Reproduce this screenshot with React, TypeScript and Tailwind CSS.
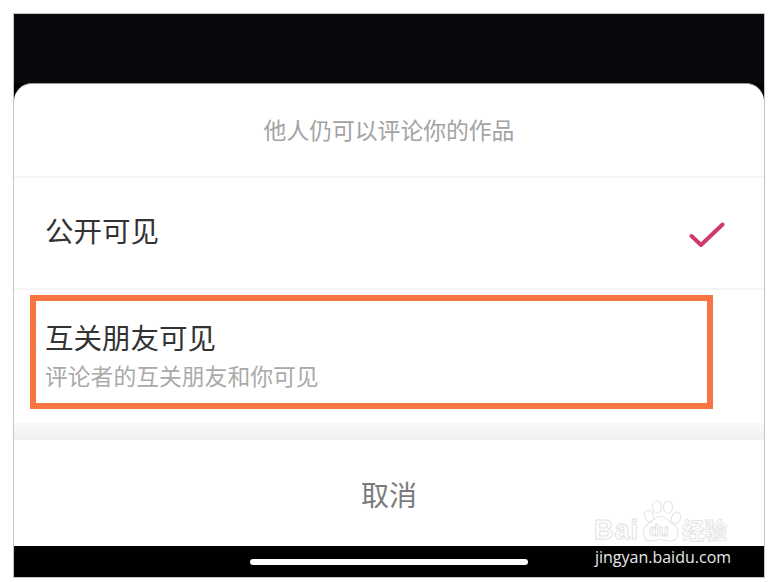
const cjk = "font-['Noto_Sans_CJK_SC','Noto_Sans',sans-serif]";

function Check() {
  return (
    <svg width="36" height="27" viewBox="0 0 36 27" fill="none" className="shrink-0">
      <path d="M2.5 14 L12 23 L33.5 2.5" stroke="#cf3a68" strokeWidth="4" strokeLinecap="round" strokeLinejoin="round" />
    </svg>
  );
}

// paw + "du" oval of the watermark
function Paw() {
  return (
    <svg width="42" height="43" viewBox="0 0 42 43" fill="none" stroke="#e6e6e6" strokeWidth="1.2" className="shrink-0">
      <ellipse cx="9" cy="16" rx="4.5" ry="6" transform="rotate(-20 9 16)" />
      <ellipse cx="17" cy="7" rx="4.5" ry="6" />
      <ellipse cx="28" cy="7" rx="4.5" ry="6" />
      <ellipse cx="36" cy="18" rx="4.5" ry="6" transform="rotate(20 36 18)" />
      <path d="M21 16 C26 16 28 21 33 24 C40 28 40 41 30 41 C26 41 25 39.5 21 39.5 C17 39.5 15 41 11 41 C2 41 1 29 8 24 C13 21 16 16 21 16 Z" />
    </svg>
  );
}

function Watermark() {
  return (
    <div className="absolute left-[594px] top-[500px] flex w-[138px] flex-col items-center">
      <div className="flex h-[43px] w-full items-end">
        <span className="w-[46px] font-['Liberation_Sans',sans-serif] text-[27px] leading-[26px] font-bold tracking-[1px] text-white [-webkit-text-stroke:1px_#e2e2e2]">Bai</span>
        <div className="relative h-[43px] w-[42px] shrink-0">
          <Paw />
          <span className="absolute left-[9px] top-[22px] font-['Liberation_Sans',sans-serif] text-[16px] leading-[18px] font-bold text-white [-webkit-text-stroke:0.8px_#e0e0e0]">du</span>
        </div>
        <span className={`${cjk} shrink-0 text-[22.5px] leading-[28px] font-bold text-white [-webkit-text-stroke:0.8px_#e2e2e2]`}>经验</span>
      </div>
      <div className="mt-[4px] whitespace-nowrap font-['Open_Sans',sans-serif] text-[16px] leading-[20px] text-[#e8e8e8]">jingyan.baidu.com</div>
    </div>
  );
}

export default function App() {
  return (
    <div className={`${cjk} relative h-[582px] w-[773px] overflow-hidden bg-white pl-[13px] pt-[13px]`}>
      <div className="flex h-[565px] w-[752px] flex-col border border-[#c4c4c4] bg-black">
        <div className="h-[69px] shrink-0 bg-[#08090c]" />
        <div className="flex h-[463px] shrink-0 flex-col overflow-hidden rounded-t-[18px] border-t border-[#9a9a9a] bg-white">
          <div className="flex h-[94px] shrink-0 items-center justify-center border-b-2 border-[#f5f5f5] text-[22.8px] text-[#a3a3a3]">
            他人仍可以评论你的作品
          </div>
          <div className="flex h-[112px] shrink-0 items-center justify-between border-b-2 border-[#f5f5f5] pb-[2px] pl-[31px] pr-[39px]">
            <span className="pb-[4px] text-[28.5px] leading-none text-[#333]">公开可见</span>
            <div className="pt-[6px]"><Check /></div>
          </div>
          <div className="flex h-[133px] shrink-0 flex-col pl-[31px] pt-[31px]">
            <div className="text-[28.5px] leading-[32px] text-[#333]">互关朋友可见</div>
            <div className="mt-[7px] text-[22.8px] leading-[32px] text-[#aaa]">评论者的互关朋友和你可见</div>
          </div>
          <div className="h-[17px] shrink-0 bg-gradient-to-b from-[#f9f9f9] to-[#f1f1f1]" />
          <div className="flex flex-1 items-center justify-center pt-[2px] text-[28px] text-[#7b7b7b]">取消</div>
        </div>
        <div className="flex flex-1 items-center justify-center">
          <div className="h-[6px] w-[278px] rounded-full bg-white" />
        </div>
      </div>
      {/* annotation drawn over the screenshot */}
      <div className="absolute left-[30px] top-[295px] h-[114px] w-[683px] border-[6px] border-[#f77443]" />
      <Watermark />
    </div>
  );
}
